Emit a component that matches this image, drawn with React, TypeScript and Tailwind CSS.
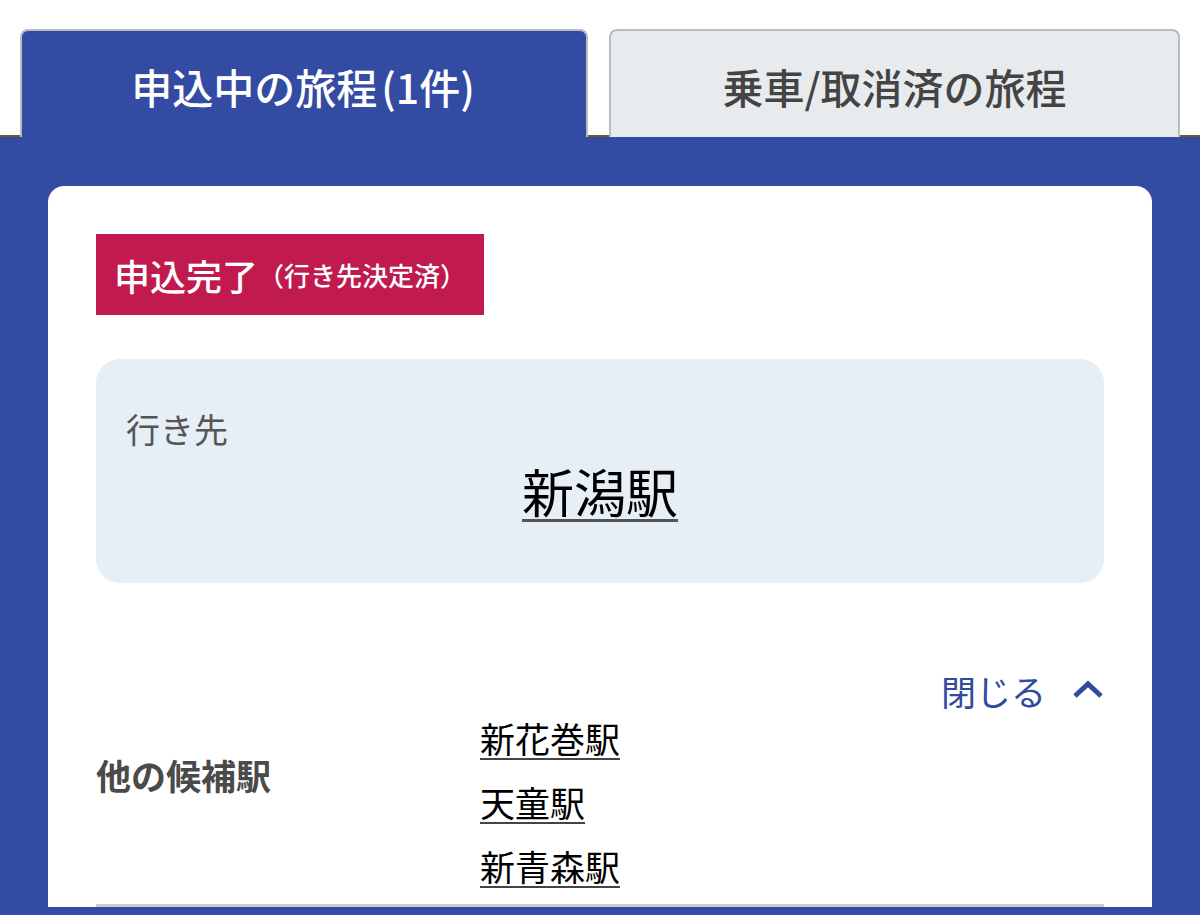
const FONT = "font-['Noto_Sans_CJK_JP','Noto_Sans',sans-serif]";

const stations = ['新花巻駅', '天童駅', '新青森駅'];

function ChevronUp() {
  return (
    <svg width="32" height="20" viewBox="0 0 32 20" fill="none" className="text-[#3149a0]">
      <path d="M3 16 L16 4 L29 16" stroke="currentColor" strokeWidth="5" strokeLinejoin="miter" />
    </svg>
  );
}

export default function App() {
  return (
    <div className={`${FONT} w-[1200px] h-[915px] overflow-hidden bg-white`}>
      {/* Tabs */}
      <div className="flex gap-[21px] px-[20px] pt-[29px] border-b-[2px] border-[#6b5a22]">
        <div className="w-[569px] h-[108px] -mb-[2px] flex items-center justify-center bg-[#334ba3] border-2 border-b-0 border-[#b9bdc2] rounded-t-lg">
          <span className="text-[41px] font-medium text-white leading-none pt-[4px]">
            申込中の旅程<span className="ml-[4px]">(</span>1件<span className="mr-[2px]">)</span>
          </span>
        </div>
        <div className="w-[572px] h-[108px] -mb-[2px] flex items-center justify-center bg-[#e8ebed] border-2 border-b-0 border-[#b9bdc2] rounded-t-lg">
          <span className="text-[41px] font-medium text-[#444] leading-none pt-[4px]">乗車/取消済の旅程</span>
        </div>
      </div>

      {/* Blue area */}
      <div className="bg-[#334ba3] px-[48px] pt-[49px] h-full">
        <div className="bg-white rounded-t-2xl px-[48px] pt-[48px]">
          {/* Status badge */}
          <div className="inline-flex items-center h-[81px] px-[18px] bg-[#c01a4e] text-white">
            <span className="text-[36px] font-medium leading-none">申込完了</span>
            <span className="text-[26px] font-medium leading-none">（行き先決定済）</span>
          </div>

          {/* Destination */}
          <div className="mt-[44px] h-[224px] rounded-3xl bg-[#e6eef6] px-[30px] pt-[44px]">
            <div className="text-[34px] text-[#555] leading-normal">行き先</div>
            <div className="text-center -mt-[2px]">
              <a className="text-[52px] text-black leading-normal underline decoration-[3px] decoration-[#555] underline-offset-[6px]">
                新潟駅
              </a>
            </div>
          </div>

          {/* Other candidates */}
          <div className="mt-[87px] flex justify-end items-center h-[40px] gap-[26px] text-[#3149a0]">
            <span className="text-[35px] leading-none">閉じる</span>
            <ChevronUp />
          </div>
          <div className="-mt-[4px] flex border-b-[3px] border-[#cbcbcb] pb-[6px]">
            <div className="w-[384px] pt-[37px] text-[35px] font-bold text-[#4a4a4a] leading-[64px] h-fit">
              <span className="leading-none">他の候補駅</span>
            </div>
            <div className="flex flex-col">
              {stations.map((s) => (
                <a
                  key={s}
                  className="text-[35px] text-black leading-[64px] underline decoration-[2px] decoration-[#444] underline-offset-[5px]"
                >
                  {s}
                </a>
              ))}
            </div>
          </div>
        </div>
      </div>
    </div>
  );
}
